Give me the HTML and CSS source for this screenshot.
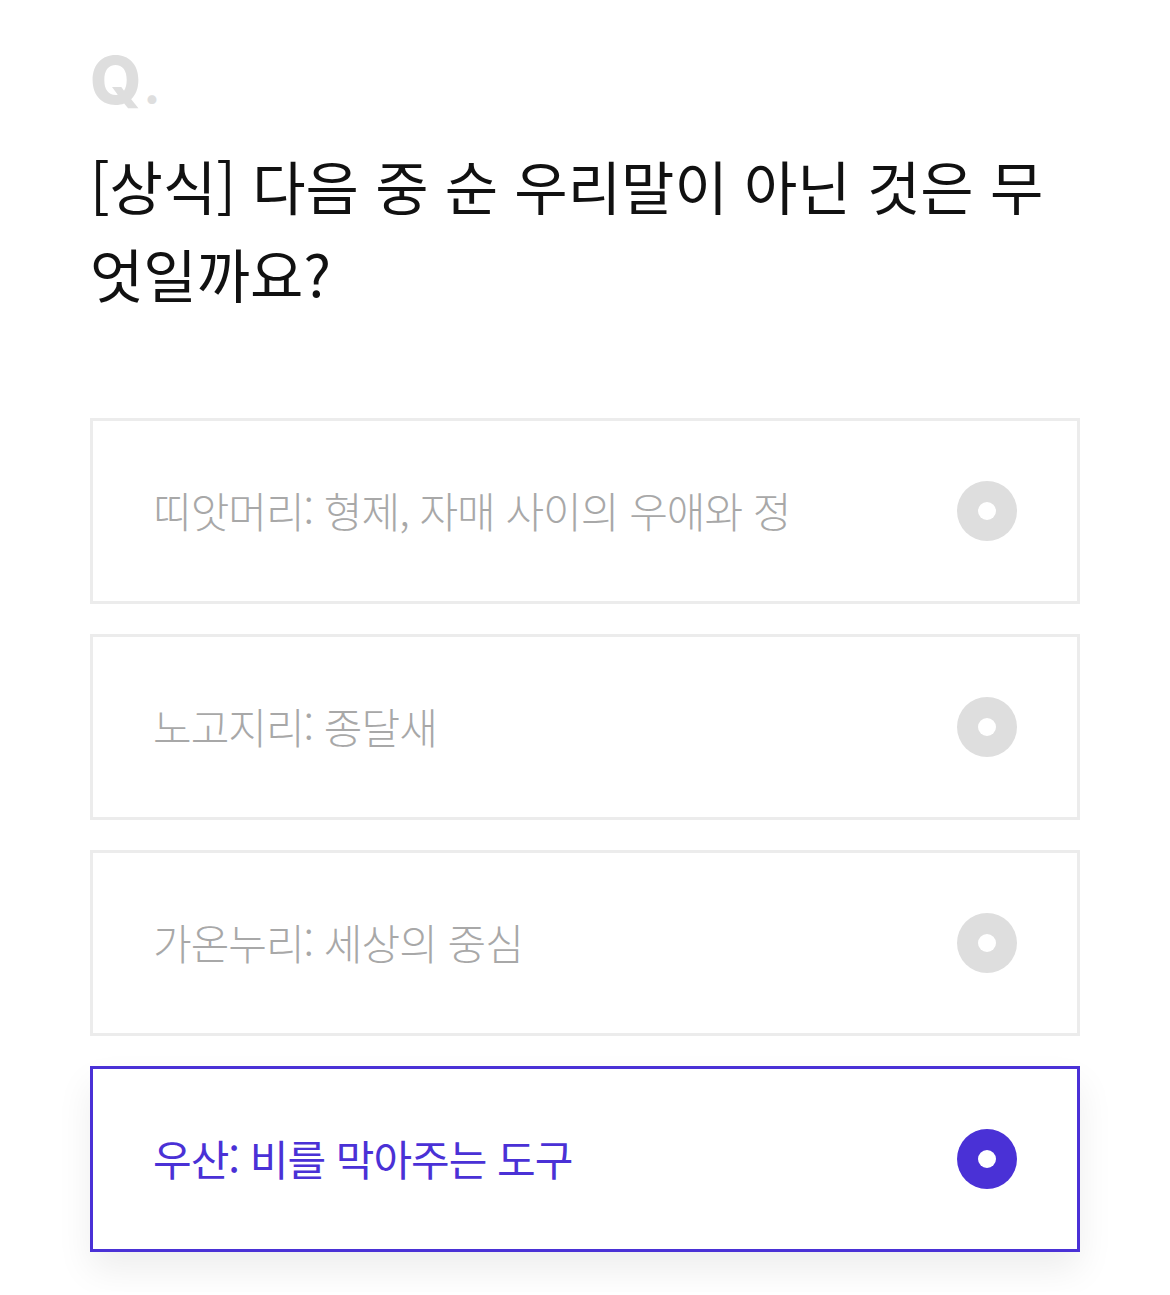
FILE: index.html
```html
<!DOCTYPE html>
<html lang="ko">
<head>
    <meta charset="UTF-8">
    <meta name="viewport" content="width=device-width, initial-scale=1.0">
    <title>Quiz</title>
    <link rel="stylesheet" href="styles.css">
</head>
<body>
    <div class="quiz">
        <div class="q-mark">Q<span class="dot">.</span></div>
        <h1 class="question">[상식] 다음 중 순 우리말이 아닌 것은 무엇일까요?</h1>

        <ul class="options">
            <li class="option">
                <span class="label">띠앗머리: 형제, 자매 사이의 우애와 정</span>
                <span class="radio"></span>
            </li>
            <li class="option">
                <span class="label">노고지리: 종달새</span>
                <span class="radio"></span>
            </li>
            <li class="option">
                <span class="label">가온누리: 세상의 중심</span>
                <span class="radio"></span>
            </li>
            <li class="option selected">
                <span class="label">우산: 비를 막아주는 도구</span>
                <span class="radio"></span>
            </li>
        </ul>
    </div>
</body>
</html>
```

FILE: styles.css
```css
body {
    margin: 0;
    background: #fff;
    font-family: "Noto Sans CJK KR", "Noto Sans", sans-serif;
}
.quiz {
    padding: 45px 90px 40px;
}
.q-mark {
    font-family: "Inter", "Noto Sans", sans-serif;
    font-size: 66px;
    font-weight: 800;
    color: #dedede;
    line-height: 70px;
    letter-spacing: -2px;
}
.q-mark .dot {
    font-size: 48px;
    margin-left: 4px;
}
.question {
    max-width: 960px;
    margin: 19px 0 0;
    font-size: 58px;
    font-weight: 400;
    line-height: 88px;
    color: #111;
    letter-spacing: 0;
}
.options {
    list-style: none;
    margin: 101px 0 0;
    padding: 0;
    display: flex;
    flex-direction: column;
    gap: 30px;
}
.option {
    height: 186px;
    box-sizing: border-box;
    border: 3px solid #ececec;
    background: #fff;
    padding: 0 60px 4px;
    display: flex;
    align-items: center;
    justify-content: space-between;
}
.label {
    font-size: 42px;
    font-weight: 300;
    color: #a8a8a8;
    letter-spacing: -1px;
}
.radio {
    width: 60px;
    height: 60px;
    border-radius: 50%;
    background: #dedede;
    position: relative;
    top: 2px;
}
.radio::after {
    content: "";
    position: absolute;
    left: 21px;
    top: 21px;
    width: 18px;
    height: 18px;
    border-radius: 50%;
    background: #fff;
}
.option.selected {
    border-color: #4a31d6;
    box-shadow: 0 18px 34px rgba(0, 0, 0, 0.07);
}
.option.selected .label {
    color: #4a31d6;
    font-weight: 400;
}
.option.selected .radio {
    background: #4a31d6;
}
```
